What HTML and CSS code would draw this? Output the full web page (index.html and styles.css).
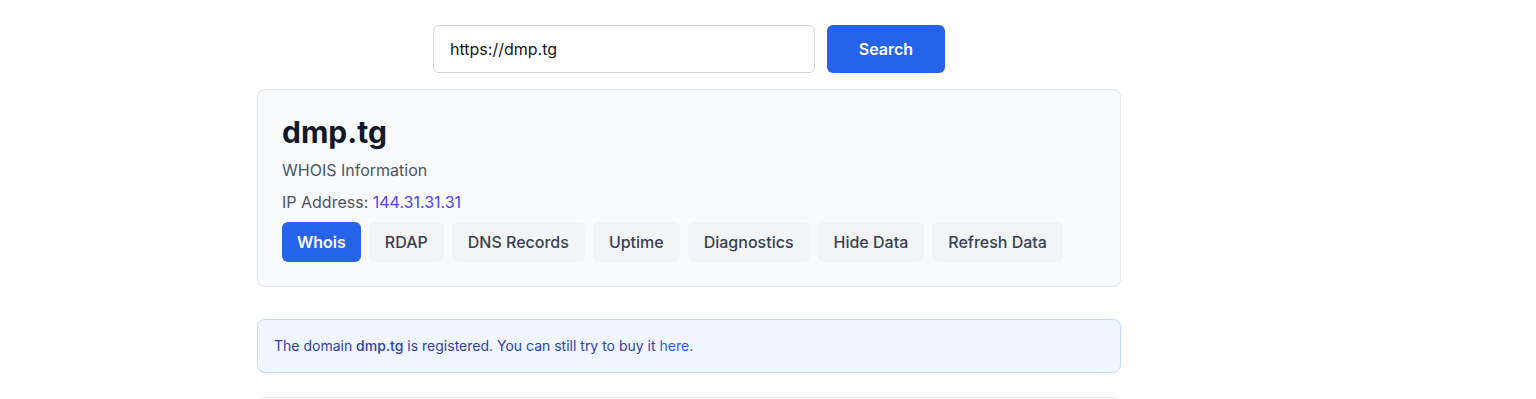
FILE: index.html
```html
<!DOCTYPE html>
<html lang="en">
<head>
  <meta charset="UTF-8" />
  <meta name="viewport" content="width=device-width, initial-scale=1.0" />
  <title>dmp.tg - WHOIS Lookup</title>
  <link rel="stylesheet" href="styles.css">
</head>
<body>
  <div class="page">
    <main class="main">
      <div class="container">
        <form class="search" onsubmit="return false">
          <input type="text" class="search-input" value="https://dmp.tg" />
          <button class="search-btn" type="submit">Search</button>
        </form>

        <section class="card">
          <h1 class="domain">dmp.tg</h1>
          <p class="subtitle">WHOIS Information</p>
          <p class="ip">IP Address: <a href="#">144.31.31.31</a></p>
          <div class="tabs">
            <button class="tab active">Whois</button>
            <button class="tab">RDAP</button>
            <button class="tab">DNS Records</button>
            <button class="tab">Uptime</button>
            <button class="tab">Diagnostics</button>
            <button class="tab">Hide Data</button>
            <button class="tab">Refresh Data</button>
          </div>
        </section>

        <div class="alert">
          The domain <strong>dmp.tg</strong> is registered. You can still try to buy it <a href="#">here</a>.
        </div>

        <section class="card result"></section>
      </div>
    </main>
    <aside class="aside"></aside>
  </div>
</body>
</html>
```

FILE: styles.css
```css
* {
  box-sizing: border-box;
}

body {
  margin: 0;
  font-family: Inter, "Noto Sans", sans-serif;
  color: #111827;
  background: #ffffff;
}

.page {
  display: flex;
}

.main {
  flex: 1;
  padding-top: 25px;
}

.aside {
  width: 158px;
}

.container {
  max-width: 864px;
  margin: 0 auto;
}

.search {
  display: flex;
  gap: 12px;
  max-width: 512px;
  margin: 0 auto 16px;
}

.search-input {
  flex: 1;
  height: 48px;
  padding: 0 16px;
  font: inherit;
  font-size: 16px;
  color: #111827;
  border: 1px solid #d1d5db;
  border-radius: 6px;
  outline: none;
}

.search-btn {
  width: 118px;
  height: 48px;
  font: inherit;
  font-size: 16px;
  font-weight: 600;
  color: #ffffff;
  background: #2563eb;
  border: none;
  border-radius: 6px;
  cursor: pointer;
}

.card {
  display: flex;
  flex-direction: column;
  gap: 8px;
  padding: 24px;
  background: #f9fafb;
  border: 1px solid #e5e7eb;
  border-radius: 8px;
}

.domain {
  margin: 0;
  font-size: 30px;
  line-height: 36px;
  font-weight: 700;
  color: #111827;
}

.subtitle,
.ip {
  margin: 0;
  font-size: 16px;
  line-height: 24px;
  color: #4b5563;
}

.ip a {
  color: #4f46e5;
  text-decoration: none;
}

.tabs {
  display: flex;
  gap: 8px;
}

.tab {
  height: 40px;
  padding: 0 16px;
  font: inherit;
  font-size: 16px;
  font-weight: 500;
  color: #374151;
  background: #f3f4f6;
  border: none;
  border-radius: 6px;
  cursor: pointer;
}

.tab.active {
  padding: 0 15px;
  font-weight: 600;
  color: #ffffff;
  background: #2563eb;
}

.alert {
  margin-top: 32px;
  padding: 16px;
  font-size: 14px;
  line-height: 20px;
  color: #2f3ea8;
  background: #eff6ff;
  border: 1px solid #bfdbfe;
  border-radius: 8px;
}

.alert strong {
  font-weight: 500;
}

.alert a {
  color: #2563eb;
  text-decoration: none;
}

.result {
  margin-top: 24px;
  height: 120px;
}
```
